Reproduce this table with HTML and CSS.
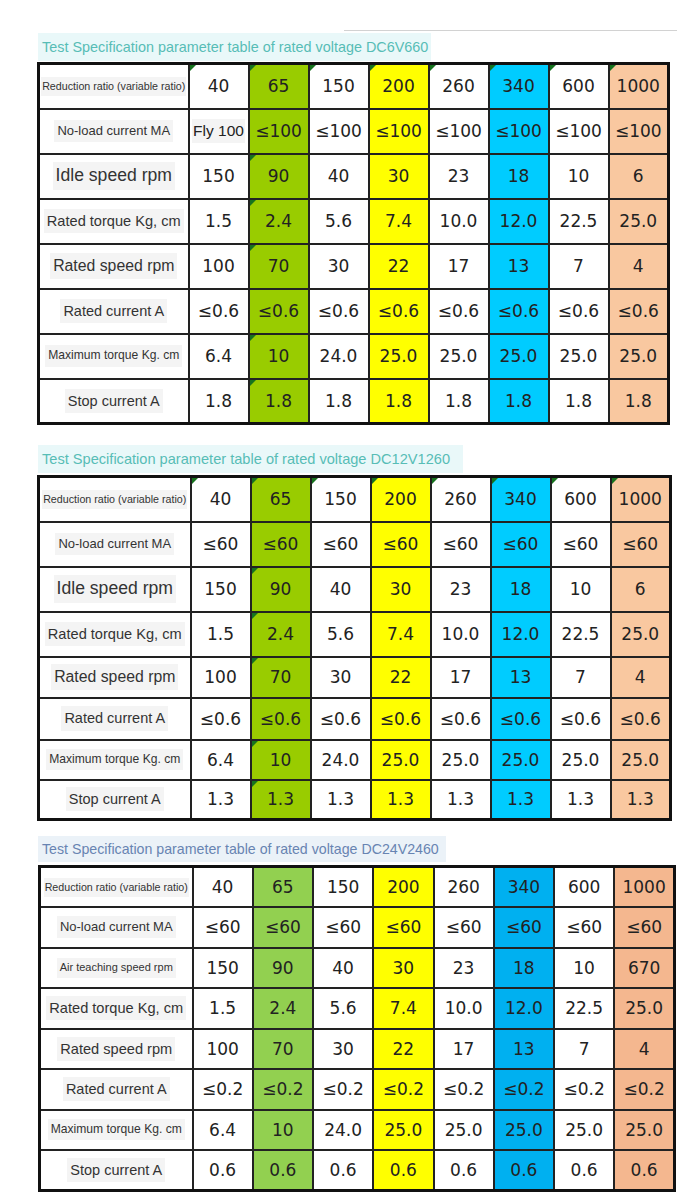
FILE: index.html
```html
<!DOCTYPE html>
<html>
<head>
<meta charset="utf-8">
<title>Test Specification parameter tables</title>
<link rel="stylesheet" href="styles.css">
</head>
<body>
<div class="rule"></div>

<section class="block b1">
  <div class="title teal">Test Specification parameter table of rated voltage DC6V660</div>
  <table class="spec s1">
    <colgroup><col class="lc"><col class="dc"><col class="dc"><col class="dc"><col class="dc"><col class="dc"><col class="dc"><col class="dc"><col class="dc"></colgroup>
    <tr><th><span class="lab f-red">Reduction ratio (variable ratio)</span></th><td class="mk">40</td><td class="mk">65</td><td class="mk">150</td><td class="mk">200</td><td class="mk">260</td><td class="mk">340</td><td class="mk">600</td><td class="mk">1000</td></tr>
    <tr><th><span class="lab f-nl">No-load current MA</span></th><td><span class="fly">Fly 100</span></td><td>≤100</td><td>≤100</td><td>≤100</td><td>≤100</td><td>≤100</td><td>≤100</td><td>≤100</td></tr>
    <tr><th><span class="lab f-idle">Idle speed rpm</span></th><td>150</td><td class="mk">90</td><td>40</td><td>30</td><td>23</td><td>18</td><td>10</td><td>6</td></tr>
    <tr><th><span class="lab f-torque">Rated torque Kg, cm</span></th><td>1.5</td><td class="mk">2.4</td><td>5.6</td><td>7.4</td><td>10.0</td><td>12.0</td><td>22.5</td><td>25.0</td></tr>
    <tr><th><span class="lab f-speed">Rated speed rpm</span></th><td>100</td><td class="mk">70</td><td>30</td><td>22</td><td>17</td><td>13</td><td>7</td><td>4</td></tr>
    <tr><th><span class="lab f-cur">Rated current A</span></th><td>≤0.6</td><td>≤0.6</td><td>≤0.6</td><td>≤0.6</td><td>≤0.6</td><td>≤0.6</td><td>≤0.6</td><td>≤0.6</td></tr>
    <tr><th><span class="lab f-max">Maximum torque Kg. cm</span></th><td>6.4</td><td class="mk">10</td><td>24.0</td><td>25.0</td><td>25.0</td><td>25.0</td><td>25.0</td><td>25.0</td></tr>
    <tr><th><span class="lab f-stop">Stop current A</span></th><td>1.8</td><td class="mk">1.8</td><td>1.8</td><td>1.8</td><td>1.8</td><td>1.8</td><td>1.8</td><td>1.8</td></tr>
  </table>
</section>

<section class="block b2">
  <div class="title teal">Test Specification parameter table of rated voltage DC12V1260</div>
  <table class="spec s2">
    <colgroup><col class="lc"><col class="dc"><col class="dc"><col class="dc"><col class="dc"><col class="dc"><col class="dc"><col class="dc"><col class="dc"></colgroup>
    <tr><th><span class="lab f-red">Reduction ratio (variable ratio)</span></th><td class="mk">40</td><td class="mk">65</td><td class="mk">150</td><td class="mk">200</td><td class="mk">260</td><td class="mk">340</td><td class="mk">600</td><td class="mk">1000</td></tr>
    <tr><th><span class="lab f-nl">No-load current MA</span></th><td>≤60</td><td>≤60</td><td>≤60</td><td>≤60</td><td>≤60</td><td>≤60</td><td>≤60</td><td>≤60</td></tr>
    <tr><th><span class="lab f-idle">Idle speed rpm</span></th><td>150</td><td class="mk">90</td><td>40</td><td>30</td><td>23</td><td>18</td><td>10</td><td>6</td></tr>
    <tr><th><span class="lab f-torque">Rated torque Kg, cm</span></th><td>1.5</td><td class="mk">2.4</td><td>5.6</td><td>7.4</td><td>10.0</td><td>12.0</td><td>22.5</td><td>25.0</td></tr>
    <tr><th><span class="lab f-speed">Rated speed rpm</span></th><td>100</td><td class="mk">70</td><td>30</td><td>22</td><td>17</td><td>13</td><td>7</td><td>4</td></tr>
    <tr><th><span class="lab f-cur">Rated current A</span></th><td>≤0.6</td><td>≤0.6</td><td>≤0.6</td><td>≤0.6</td><td>≤0.6</td><td>≤0.6</td><td>≤0.6</td><td>≤0.6</td></tr>
    <tr><th><span class="lab f-max">Maximum torque Kg. cm</span></th><td>6.4</td><td class="mk">10</td><td>24.0</td><td>25.0</td><td>25.0</td><td>25.0</td><td>25.0</td><td>25.0</td></tr>
    <tr><th><span class="lab f-stop">Stop current A</span></th><td>1.3</td><td class="mk">1.3</td><td>1.3</td><td>1.3</td><td>1.3</td><td>1.3</td><td>1.3</td><td>1.3</td></tr>
  </table>
</section>

<section class="block b3">
  <div class="title slate">Test Specification parameter table of rated voltage DC24V2460</div>
  <table class="spec s3">
    <colgroup><col class="lc"><col class="dc"><col class="dc"><col class="dc"><col class="dc"><col class="dc"><col class="dc"><col class="dc"><col class="dc"></colgroup>
    <tr><th><span class="lab f-red">Reduction ratio (variable ratio)</span></th><td>40</td><td>65</td><td>150</td><td>200</td><td>260</td><td>340</td><td>600</td><td>1000</td></tr>
    <tr><th><span class="lab f-nl">No-load current MA</span></th><td>≤60</td><td>≤60</td><td>≤60</td><td>≤60</td><td>≤60</td><td>≤60</td><td>≤60</td><td>≤60</td></tr>
    <tr><th><span class="lab f-air">Air teaching speed rpm</span></th><td>150</td><td>90</td><td>40</td><td>30</td><td>23</td><td>18</td><td>10</td><td>670</td></tr>
    <tr><th><span class="lab f-torque">Rated torque Kg, cm</span></th><td>1.5</td><td>2.4</td><td>5.6</td><td>7.4</td><td>10.0</td><td>12.0</td><td>22.5</td><td>25.0</td></tr>
    <tr><th><span class="lab f-speed">Rated speed rpm</span></th><td>100</td><td>70</td><td>30</td><td>22</td><td>17</td><td>13</td><td>7</td><td>4</td></tr>
    <tr><th><span class="lab f-cur">Rated current A</span></th><td>≤0.2</td><td>≤0.2</td><td>≤0.2</td><td>≤0.2</td><td>≤0.2</td><td>≤0.2</td><td>≤0.2</td><td>≤0.2</td></tr>
    <tr><th><span class="lab f-max">Maximum torque Kg. cm</span></th><td>6.4</td><td>10</td><td>24.0</td><td>25.0</td><td>25.0</td><td>25.0</td><td>25.0</td><td>25.0</td></tr>
    <tr><th><span class="lab f-stop">Stop current A</span></th><td>0.6</td><td>0.6</td><td>0.6</td><td>0.6</td><td>0.6</td><td>0.6</td><td>0.6</td><td>0.6</td></tr>
  </table>
</section>
</body>
</html>
```

FILE: styles.css
```css
html, body {
  margin: 0;
  padding: 0;
  background: #ffffff;
}
body {
  width: 700px;
  font-family: "Liberation Sans", Arial, sans-serif;
  color: #222222;
}

.rule {
  margin: 30px 0 0 344px;
  width: 333px;
  height: 1px;
  background: #d2d2d2;
}

.title {
  box-sizing: border-box;
  margin-left: 38px;
  height: 28px;
  line-height: 28px;
  padding-left: 4px;
  white-space: nowrap;
}
.teal {
  background: #e9f8f9;
  color: #57bdb6;
}
.slate {
  background: #ebf2f8;
  color: #6884b2;
}
.b1 .title { margin-top: 2px; width: 393px; font-size: 14.4px; }
.b2 .title { margin-top: 20px; width: 425px; font-size: 14.6px; }
.b3 .title { margin-top: 15px; width: 408px; height: 26px; line-height: 26px; font-size: 14.2px; }

.spec {
  border-collapse: collapse;
  table-layout: fixed;
  border: 3px solid #111111;
}
.s1 { margin: 1px 0 0 37px; width: 630px; }
.s2 { margin: 2px 0 0 37px; width: 632px; }
.s3 { margin: 3px 0 0 38px; width: 635px; }

.s1 .lc { width: 150px; }
.s2 .lc { width: 152px; }
.s3 .lc { width: 153px; }
.dc { width: 60px; }
.s3 .dc { width: 60.25px; }

.spec th,
.spec td {
  border: 2px solid #222222;
  padding: 0;
  text-align: center;
  vertical-align: middle;
  position: relative;
}
.spec th {
  font-weight: normal;
  color: #333333;
  white-space: nowrap;
}
.spec td {
  font-family: "DejaVu Sans", Verdana, sans-serif;
  font-size: 17px;
  color: #222222;
  white-space: nowrap;
}

/* colored columns: 65, 200, 340, 1000 */
.s1 td:nth-child(3), .s2 td:nth-child(3) { background: #99cc00; }
.s1 td:nth-child(5), .s2 td:nth-child(5) { background: #ffff00; }
.s1 td:nth-child(7), .s2 td:nth-child(7) { background: #00ccff; }
.s1 td:nth-child(9), .s2 td:nth-child(9) { background: #f9c8a0; }

.s3 td:nth-child(3) { background: #92d050; }
.s3 td:nth-child(5) { background: #ffff00; }
.s3 td:nth-child(7) { background: #00b0f0; }
.s3 td:nth-child(9) { background: #f4b78f; }

/* row heights */
.s1 tr { height: 45px; }
.s2 tr:nth-child(1) { height: 45px; }
.s2 tr:nth-child(2) { height: 45px; }
.s2 tr:nth-child(3) { height: 45px; }
.s2 tr:nth-child(4) { height: 45px; }
.s2 tr:nth-child(5) { height: 41px; }
.s2 tr:nth-child(6) { height: 42px; }
.s2 tr:nth-child(7) { height: 40px; }
.s2 tr:nth-child(8) { height: 40px; }
.s3 tr { height: 40.5px; }

/* green corner marker */
.mk::before {
  content: "";
  position: absolute;
  top: 0;
  left: 0;
  border-top: 6px solid #16731f;
  border-right: 6px solid transparent;
}

/* labels */
.lab {
  display: inline-block;
  background: #f4f4f4;
  padding: 3px 3px;
  line-height: 1.25;
}
.f-red { font-size: 10.7px; padding: 3px 1px; }
.f-nl { font-size: 13px; }
.f-idle { font-size: 17.6px; }
.f-torque { font-size: 14.6px; }
.f-speed { font-size: 15.8px; }
.s3 .f-speed { font-size: 14.6px; }
.f-cur { font-size: 14.5px; }
.f-max { font-size: 12.1px; }
.f-stop { font-size: 14.5px; }
.f-air { font-size: 11px; }

.fly {
  display: inline-block;
  font-family: "Liberation Sans", Arial, sans-serif;
  font-size: 15.5px;
  background: #f4f4f4;
  padding: 3px 1px;
}
```
